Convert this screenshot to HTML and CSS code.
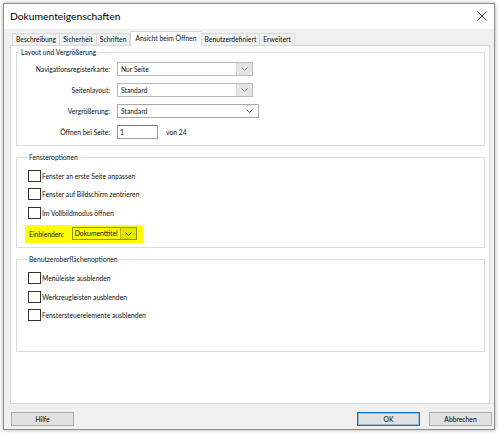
FILE: index.html
```html
<!DOCTYPE html>
<html lang="de">
<head>
<meta charset="utf-8">
<title>Dokumenteigenschaften</title>
<link rel="stylesheet" href="styles.css">
</head>
<body>
<div class="window">
  <header class="titlebar">
    <span class="title">Dokumenteigenschaften</span>
    <svg class="close" width="10" height="10" viewBox="0 0 10 10"><path d="M0.5 0.5L9.5 9.5M9.5 0.5L0.5 9.5" stroke="#404040" stroke-width="1" fill="none"/></svg>
  </header>
  <div class="client">
    <nav class="tabs">
      <span class="tab">Beschreibung</span>
      <span class="tab">Sicherheit</span>
      <span class="tab">Schriften</span>
      <span class="tab active">Ansicht beim Öffnen</span>
      <span class="tab">Benutzerdefiniert</span>
      <span class="tab">Erweitert</span>
    </nav>
    <section class="panel">
      <fieldset class="group g1">
        <legend>Layout und Vergrößerung</legend>
        <div class="form">
          <label class="lbl">Navigationsregisterkarte:</label>
          <div class="select ro sel-a"><span class="val">Nur Seite</span><span class="btn"><svg width="7" height="4" viewBox="0 0 7 4"><path d="M0.5 0.5L3.5 3.5L6.5 0.5" stroke="#808080" fill="none"/></svg></span></div>
          <label class="lbl">Seitenlayout:</label>
          <div class="select ro sel-a"><span class="val">Standard</span><span class="btn"><svg width="7" height="4" viewBox="0 0 7 4"><path d="M0.5 0.5L3.5 3.5L6.5 0.5" stroke="#808080" fill="none"/></svg></span></div>
          <label class="lbl">Vergrößerung:</label>
          <div class="select sel-b"><span class="val">Standard</span><span class="btn plain"><svg width="7" height="4" viewBox="0 0 7 4"><path d="M0.5 0.5L3.5 3.5L6.5 0.5" stroke="#606060" fill="none"/></svg></span></div>
          <label class="lbl">Öffnen bei Seite:</label>
          <div class="pagebox"><span class="input">1</span><span class="of">von 24</span></div>
        </div>
      </fieldset>
      <fieldset class="group g2">
        <legend>Fensteroptionen</legend>
        <div class="checks">
          <div class="check"><span class="box"></span><span>Fenster an erste Seite anpassen</span></div>
          <div class="check"><span class="box"></span><span>Fenster auf Bildschirm zentrieren</span></div>
          <div class="check"><span class="box"></span><span>Im Vollbildmodus öffnen</span></div>
        </div>
        <div class="highlight">
          <span class="hl-label">Einblenden:</span>
          <div class="select hl-sel"><span class="val">Dokumenttitel</span><span class="btn"><svg width="7" height="4" viewBox="0 0 7 4"><path d="M0.5 0.5L3.5 3.5L6.5 0.5" stroke="#555500" fill="none"/></svg></span></div>
        </div>
      </fieldset>
      <fieldset class="group g3">
        <legend>Benutzeroberflächenoptionen</legend>
        <div class="checks">
          <div class="check"><span class="box"></span><span>Menüleiste ausblenden</span></div>
          <div class="check"><span class="box"></span><span>Werkzeugleisten ausblenden</span></div>
          <div class="check"><span class="box"></span><span>Fenstersteuerelemente ausblenden</span></div>
        </div>
      </fieldset>
    </section>
    <footer class="buttons">
      <button class="btn-d">Hilfe</button>
      <span class="spacer"></span>
      <button class="btn-d default">OK</button>
      <button class="btn-d">Abbrechen</button>
    </footer>
  </div>
</div>
</body>
</html>
```
FILE: styles.css
```css
* { box-sizing: border-box; }
html, body { margin: 0; padding: 0; }
body {
  background: #ffffff;
  font-family: Lato, "Liberation Sans", sans-serif;
  font-size: 6.75px;
  color: #111;
  width: 500px;
  height: 433px;
  overflow: hidden;
}
.window {
  margin: 3px 0 0 3px;
  width: 492px;
  height: 427px;
  border: 1px solid #8e8e8e;
  box-shadow: 0 0 4px rgba(0,0,0,0.35);
  display: flex;
  flex-direction: column;
  background: #f0f0f0;
}
.titlebar {
  height: 25px;
  flex: none;
  background: #fff;
  display: flex;
  align-items: center;
  justify-content: space-between;
  padding: 0 7px 1px 6px;
}
.title { font-size: 10.3px; color: #000; }
.close { display: block; }
.client {
  flex: 1;
  display: flex;
  flex-direction: column;
  padding: 2px 4px 3px 6px;
}
.tabs {
  display: flex;
  align-items: flex-end;
  height: 14px;
  padding-left: 2px;
  flex: none;
}
.tab {
  height: 12px;
  line-height: 11px;
  padding: 0 3px;
  border: 1px solid #d9d9d9;
  border-bottom: none;
  border-left: none;
  background: #f0f0f0;
  white-space: nowrap;
}
.tab:first-child { border-left: 1px solid #d9d9d9; }
.tab.active {
  height: 15px;
  margin-bottom: -1px;
  background: #fff;
  border-left: 1px solid #d9d9d9;
  line-height: 13px;
  padding: 0 4px;
  position: relative;
  z-index: 1;
}
.panel {
  flex: 1;
  background: #fff;
  border: 1px solid #d9d9d9;
  padding: 2px 4px 0 5px;
  display: flex;
  flex-direction: column;
  gap: 7px;
}
.group {
  margin: 0;
  border: 1px solid #dcdcdc;
  padding: 0;
  min-width: 0;
}
.group legend {
  margin-left: 3px;
  padding: 0 1px;
  line-height: 9px;
  height: 9px;
}
.form {
  display: grid;
  grid-template-columns: 93px auto;
  justify-content: start;
  column-gap: 7px;
  row-gap: 7px;
  padding: 5px 0 6px 0;
  align-items: center;
}
.lbl { text-align: right; white-space: nowrap; line-height: 14px; }
.select {
  height: 14px;
  display: flex;
  align-items: stretch;
  border: 1px solid #b9b9b9;
  background: #fff;
}
.select .val { flex: 1; padding-left: 3px; line-height: 12px; white-space: nowrap; }
.select .btn {
  width: 16px;
  display: flex;
  align-items: center;
  justify-content: center;
  background: #e5e5e5;
  border-left: 1px solid #d4d4d4;
}
.select .btn svg { display: block; }
.sel-a { width: 136px; }
.sel-b { width: 142px; border-color: #a8a8a8; }
.select .btn.plain { background: transparent; border-left: none; width: 18px; }
.pagebox { display: flex; align-items: center; gap: 8px; }
.input {
  width: 41px;
  height: 14px;
  border: 1px solid #9a9a9a;
  border-top-color: #7a7a7a;
  padding-left: 2px;
  line-height: 12px;
}
.of { line-height: 14px; }
.g2 { padding: 0 0 4px 8px; }
.g3 { padding: 0 0 30px 8px; }
.checks {
  display: flex;
  flex-direction: column;
  gap: 6.5px;
  margin-left: 3px;
}
.g2 .checks { padding-top: 7.5px; }
.g3 .checks { padding-top: 8.5px; }
.check { display: flex; align-items: center; height: 12px; gap: 1px; }
.box {
  width: 13px;
  height: 12px;
  border: 1px solid #333;
  background: #fff;
  flex: none;
}
.highlight {
  margin-top: 6px;
  width: 118px;
  height: 18px;
  background: #ffff00;
  display: flex;
  align-items: center;
  padding-left: 4px;
  gap: 8px;
}
.hl-sel {
  width: 65px;
  height: 13px;
  background: #ffff00;
  border-color: #8f8f3a;
}
.hl-sel .val { padding-left: 2px; line-height: 11px; }
.hl-sel .btn { background: #e6e600; border-left: 1px solid #b8b800; width: 16px; }
.buttons {
  flex: none;
  display: flex;
  height: 14px;
  margin-top: 8px;
  margin-right: -2px;
  gap: 9px;
  padding-left: 1px;
}
.spacer { flex: 1; }
.btn-d {
  width: 63px;
  height: 14px;
  font-family: inherit;
  font-size: 6.75px;
  color: #000;
  background: #e1e1e1;
  border: 1px solid #adadad;
  padding: 0;
  margin: 0;
  line-height: 12px;
}
.btn-d.default {
  border-color: #0078d7;
  box-shadow: inset 0 0 0 1px rgba(0,120,215,0.35);
}
```
